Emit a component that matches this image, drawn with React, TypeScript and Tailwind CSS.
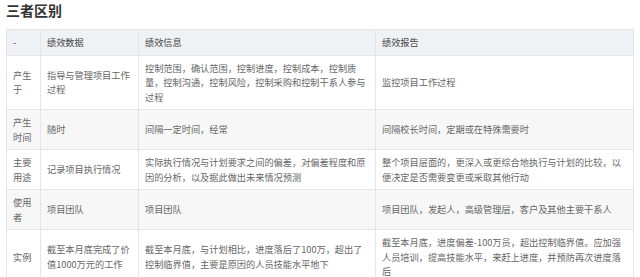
const rows: [string, string, string, string][] = [
  ["产生于", "指导与管理项目工作过程", "控制范围，确认范围，控制进度，控制成本，控制质量，控制沟通，控制风险，控制采购和控制干系人参与过程", "监控项目工作过程"],
  ["产生时间", "随时", "间隔一定时间，经常", "间隔校长时间，定期或在特殊需要时"],
  ["主要用途", "记录项目执行情况", "实际执行情况与计划要求之间的偏差，对偏差程度和原因的分析，以及据此做出未来情况预测", "整个项目层面的，更深入或更综合地执行与计划的比较，以便决定是否需要变更或采取其他行动"],
  ["使用者", "项目团队", "项目团队", "项目团队，发起人，高级管理层，客户及其他主要干系人"],
  ["实例", "截至本月底完成了价值1000万元的工作", "截至本月底，与计划相比，进度落后了100万，超出了控制临界值，主要是原因的人员技能水平地下", "截至本月底，进度偏差-100万员，超出控制临界值。应加强人员培训，提高技能水平，来赶上进度，并预防再次进度落后"],
];

const cell = "border border-[#e3e5e8] px-[6px] py-[5px] align-middle text-left font-normal";

export default function App() {
  return (
    <div className="w-[640px] h-[277px] overflow-hidden bg-white font-['Noto_Sans_CJK_SC',sans-serif]">
      <h2 className="px-[6px] pt-0 mb-[9px] text-[14px] leading-[20px] font-bold text-[#333]">三者区别</h2>
      <table className="ml-[6px] w-[627px] table-fixed border-collapse text-[9.2px] leading-[14.5px] text-[#666]">
        <colgroup>
          <col className="w-[34px]" />
          <col className="w-[98px]" />
          <col className="w-[237px]" />
          <col className="w-[258px]" />
        </colgroup>
        <thead>
          <tr className="bg-[#eff2f5] text-[#444]">
            <th className={cell}>-</th>
            <th className={cell}>绩效数据</th>
            <th className={cell}>绩效信息</th>
            <th className={cell}>绩效报告</th>
          </tr>
        </thead>
        <tbody>
          {rows.map((r, i) => (
            <tr key={i} className={i % 2 === 1 ? "bg-[#f7f7f7]" : "bg-white"}>
              {r.map((t, j) => (
                <td key={j} className={cell}>{t}</td>
              ))}
            </tr>
          ))}
        </tbody>
      </table>
    </div>
  );
}
